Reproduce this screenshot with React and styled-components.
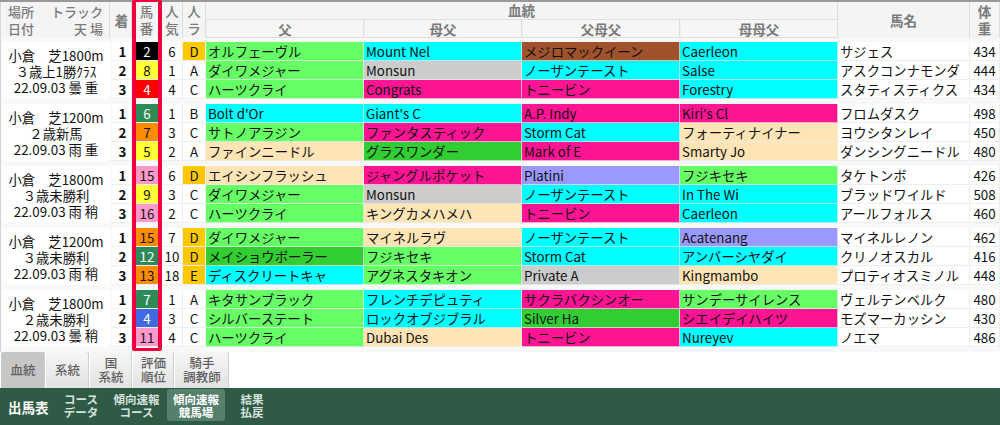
import React from 'react';
import styled, { createGlobalStyle } from 'styled-components';

const COLUMNS = '108px 2px 20px 30px 21px 23px 158px 158px 158px 158px 132px 30px';

const colors = {
  L: '#66ff66',
  C: '#00ffff',
  P: '#ff1493',
  M: '#ffe4b5',
  G: '#cccccc',
  B: '#a0522d',
  D: '#32cd32',
  V: '#9999ff',
};

const waku = {
  black: { bg: '#000000', fg: '#ffffff' },
  yellow: { bg: '#ffff33', fg: '#111111' },
  red: { bg: '#ff0000', fg: '#ffffff' },
  green: { bg: '#2e8b57', fg: '#ffffff' },
  orange: { bg: '#ff8c00', fg: '#111111' },
  pink: { bg: '#ff99cc', fg: '#111111' },
  blue: { bg: '#4169e1', fg: '#ffffff' },
};

const races = [
  {
    info: ['小倉　芝1800m', '３歳上1勝ｸﾗｽ', '22.09.03 曇 重'],
    rows: [
      ['2', 'black', '6', 'D', ['オルフェーヴル', 'L'], ['Mount Nel', 'C'], ['メジロマックイーン', 'B'], ['Caerleon', 'C'], 'サジェス', '434'],
      ['8', 'yellow', '1', 'A', ['ダイワメジャー', 'L'], ['Monsun', 'G'], ['ノーザンテースト', 'C'], ['Salse', 'C'], 'アスクコンナモンダ', '444'],
      ['4', 'red', '4', 'C', ['ハーツクライ', 'L'], ['Congrats', 'P'], ['トニービン', 'P'], ['Forestry', 'C'], 'スタティスティクス', '434'],
    ],
  },
  {
    info: ['小倉　芝1200m', '２歳新馬', '22.09.03 雨 重'],
    rows: [
      ['6', 'green', '1', 'B', ["Bolt d'Or", 'C'], ["Giant's C", 'C'], ['A.P. Indy', 'P'], ["Kiri's Cl", 'P'], 'フロムダスク', '498'],
      ['7', 'orange', '3', 'C', ['サトノアラジン', 'L'], ['ファンタスティック', 'P'], ['Storm Cat', 'C'], ['フォーティナイナー', 'M'], 'ヨウシタンレイ', '450'],
      ['5', 'yellow', '2', 'A', ['ファインニードル', 'M'], ['グラスワンダー', 'D'], ['Mark of E', 'P'], ['Smarty Jo', 'M'], 'ダンシングニードル', '480'],
    ],
  },
  {
    info: ['小倉　芝1800m', '３歳未勝利', '22.09.03 雨 稍'],
    rows: [
      ['15', 'pink', '6', 'D', ['エイシンフラッシュ', 'M'], ['ジャングルポケット', 'P'], ['Platini', 'V'], ['フジキセキ', 'L'], 'タケトンボ', '426'],
      ['9', 'yellow', '3', 'C', ['ダイワメジャー', 'L'], ['Monsun', 'G'], ['ノーザンテースト', 'C'], ['In The Wi', 'C'], 'ブラッドワイルド', '508'],
      ['16', 'pink', '2', 'C', ['ハーツクライ', 'L'], ['キングカメハメハ', 'M'], ['トニービン', 'P'], ['Caerleon', 'C'], 'アールフォルス', '460'],
    ],
  },
  {
    info: ['小倉　芝1200m', '３歳未勝利', '22.09.03 雨 稍'],
    rows: [
      ['15', 'orange', '7', 'D', ['ダイワメジャー', 'L'], ['マイネルラヴ', 'M'], ['ノーザンテースト', 'C'], ['Acatenang', 'V'], 'マイネルレノン', '462'],
      ['12', 'green', '10', 'D', ['メイショウボーラー', 'D'], ['フジキセキ', 'L'], ['Storm Cat', 'C'], ['アンバーシヤダイ', 'C'], 'クリノオスカル', '416'],
      ['13', 'orange', '18', 'E', ['ディスクリートキャ', 'C'], ['アグネスタキオン', 'L'], ['Private A', 'G'], ['Kingmambo', 'M'], 'プロティオスミノル', '448'],
    ],
  },
  {
    info: ['小倉　芝1800m', '２歳未勝利', '22.09.03 曇 稍'],
    rows: [
      ['7', 'green', '1', 'A', ['キタサンブラック', 'L'], ['フレンチデピュティ', 'C'], ['サクラバクシンオー', 'P'], ['サンデーサイレンス', 'L'], 'ヴェルテンベルク', '480'],
      ['4', 'blue', '3', 'C', ['シルバーステート', 'L'], ['ロックオブジブラル', 'C'], ['Silver Ha', 'D'], ['シエイデイハイツ', 'P'], 'モズマーカッシン', '430'],
      ['11', 'pink', '4', 'C', ['ハーツクライ', 'L'], ['Dubai Des', 'M'], ['トニービン', 'P'], ['Nureyev', 'C'], 'ノエマ', '486'],
    ],
  },
];

const tabs = [
  { label: ['血統'], width: 44, active: true },
  { label: ['系統'], width: 43 },
  { label: ['国', '系統'], width: 42 },
  { label: ['評価', '順位'], width: 41 },
  { label: ['騎手', '調教師'], width: 54 },
];

const navItems = [
  { label: ['コース', 'データ'], width: 50 },
  { label: ['傾向速報', 'コース'], width: 61 },
  { label: ['傾向速報', '競馬場'], width: 58, active: true },
  { label: ['結果', '払戻'], width: 54 },
];

const GlobalStyle = createGlobalStyle`
  html, body {
    margin: 0;
    padding: 0;
    background: #ffffff;
  }
  body {
    font-family: "Noto Sans CJK JP", "Noto Sans", sans-serif;
    color: #111111;
  }
`;

const Page = styled.div`
  position: relative;
  display: flex;
  flex-direction: column;
  width: 1000px;
  height: 425px;
  overflow: hidden;
  background: #ffffff;
`;

const TableArea = styled.div`
  display: flex;
  flex-direction: column;
  height: 352px;
  padding-left: 2px;
  border-top: 2px solid #9c9898;
  background: #f8f8f8;
  box-sizing: border-box;
  box-shadow: inset 1px 0 0 #d8d4d4;
`;

const Header = styled.div`
  display: grid;
  grid-template-columns: ${COLUMNS};
  grid-template-rows: 17px 19px;
  height: 36px;
  margin-bottom: 4px;
  color: #7a7a7a;
  font-weight: 700;
  font-size: 13.5px;
  line-height: 17px;
  background: #f4f4f4;
`;

const HeadCell = styled.div`
  grid-column: ${(p) => p.$col};
  grid-row: ${(p) => p.$row || '1 / 3'};
  display: flex;
  flex-direction: column;
  align-items: center;
  justify-content: center;
  text-align: center;
  border-right: 1px solid #dddddd;
  font-weight: ${(p) => (p.$light ? 500 : 700)};
  box-sizing: border-box;
`;

const SubHead = styled(HeadCell)`
  border: 1px solid #dedede;
  border-left-color: #eeeeee;
  background: #f6f6f6;
  padding-top: 2px;
`;

const PlaceHead = styled(HeadCell)`
  flex-direction: row;
  justify-content: space-between;
  padding: 0 6px;
  text-align: left;
  font-weight: 500;
  font-size: 13px;
  white-space: nowrap;
`;

const RightText = styled.div`
  text-align: right;
`;

const Race = styled.div`
  display: grid;
  grid-template-columns: ${COLUMNS};
  grid-auto-rows: 19px;
  margin-bottom: 5px;
`;

const Info = styled.div`
  grid-column: 1;
  grid-row: 1 / 4;
  display: flex;
  flex-direction: column;
  align-items: center;
  justify-content: center;
  padding-top: 3px;
  background: #ffffff;
  font-size: 13.33px;
  line-height: 16px;
  white-space: pre;
`;

const PlainCell = styled.div`
  display: flex;
  align-items: center;
  justify-content: ${(p) => p.$align || 'center'};
  background: #ffffff;
  border-bottom: 1px solid #eeeeee;
  border-right: 1px solid #eeeeee;
  box-sizing: border-box;
  font-size: 13.33px;
  font-weight: ${(p) => (p.$bold ? 700 : 400)};
  padding-left: ${(p) => (p.$align ? '2px' : '0')};
  white-space: nowrap;
  overflow: hidden;
`;

const Rank = styled(PlainCell)`
  grid-column: 3;
  padding-left: 2px;
`;

const Gate = styled.div`
  grid-column: 4;
  display: flex;
  align-items: center;
  justify-content: center;
  margin: 0 4px;
  background: ${(p) => p.$bg};
  color: ${(p) => p.$fg};
  border-bottom: 1px solid #eeeeee;
  box-sizing: border-box;
  font-size: 13.33px;
`;

const Mark = styled(PlainCell)`
  background: ${(p) => (p.$hot ? '#ffc800' : '#ffffff')};
`;

const Blood = styled.div`
  display: flex;
  align-items: center;
  padding-left: 2px;
  background: ${(p) => colors[p.$c]};
  border-right: 1px solid rgba(238, 238, 238, 0.7);
  border-bottom: 1px solid rgba(238, 238, 238, 0.7);
  box-sizing: border-box;
  font-size: 13.33px;
  white-space: nowrap;
  overflow: hidden;
`;

const RedFrame = styled.div`
  position: absolute;
  left: 132px;
  top: 0;
  width: 30px;
  height: 351px;
  border: 4px solid #f0003c;
  border-top-width: 2px;
  border-bottom-width: 3px;
  border-radius: 2px;
  box-sizing: border-box;
  pointer-events: none;
`;

const TabBar = styled.div`
  display: flex;
  gap: 1px;
  height: 36px;
  padding-left: 1px;
  background: #ffffff;
`;

const Tab = styled.div`
  display: flex;
  flex-direction: column;
  align-items: center;
  justify-content: center;
  width: ${(p) => p.$w}px;
  color: #5f5f5f;
  font-size: 12.5px;
  font-weight: 500;
  line-height: 14.5px;
  border-radius: 2px 2px 0 0;
  box-sizing: border-box;
  background: ${(p) =>
    p.$active ? '#c6c6c6' : 'linear-gradient(#f6f6f6, #e2e2e2)'};
  box-shadow: inset -1px 0 0 #cfcfcf;
`;

const NavBar = styled.div`
  display: flex;
  align-items: stretch;
  flex: 1;
  padding: 1px 0 4px 8px;
  background: #2f5a46;
  color: #ffffff;
`;

const NavTitle = styled.div`
  display: flex;
  align-items: center;
  width: 48px;
  font-size: 13.5px;
  font-weight: 700;
  padding-top: 3px;
`;

const NavItem = styled.div`
  display: flex;
  flex-direction: column;
  align-items: center;
  justify-content: center;
  width: ${(p) => p.$w}px;
  font-size: 11.5px;
  font-weight: 700;
  line-height: 13px;
  padding-top: 2px;
  color: ${(p) => (p.$active ? '#ffffff' : '#d8e2dd')};
  background: ${(p) => (p.$active ? '#55806c' : 'transparent')};
  border-radius: 3px;
`;

function RaceRow({ row }) {
  const [no, gate, pop, mark, f, mf, fmf, mmf, name, weight] = row;
  return (
    <>
      <Gate $bg={waku[gate].bg} $fg={waku[gate].fg}>
        {no}
      </Gate>
      <PlainCell>{pop}</PlainCell>
      <Mark $hot={mark === 'D' || mark === 'E'}>{mark}</Mark>
      {[f, mf, fmf, mmf].map(([text, c]) => (
        <Blood key={text + c} $c={c}>
          {text}
        </Blood>
      ))}
      <PlainCell $align="flex-start">{name}</PlainCell>
      <PlainCell>{weight}</PlainCell>
    </>
  );
}

export default function App() {
  return (
    <Page>
      <GlobalStyle />
      <TableArea>
        <Header>
          <PlaceHead $col="1">
            <div>
              場所
              <br />
              日付
            </div>
            <RightText>
              トラック
              <br />
              天 場
            </RightText>
          </PlaceHead>
          <HeadCell $col="3">着</HeadCell>
          <HeadCell $col="4" $light>
            <div>馬</div>
            <div>番</div>
          </HeadCell>
          <HeadCell $col="5" $light>
            <div>人</div>
            <div>気</div>
          </HeadCell>
          <HeadCell $col="6" $light>
            <div>人</div>
            <div>ラ</div>
          </HeadCell>
          <HeadCell $col="7 / 11" $row="1">
            血統
          </HeadCell>
          <SubHead $col="7" $row="2">父</SubHead>
          <SubHead $col="8" $row="2">母父</SubHead>
          <SubHead $col="9" $row="2">父母父</SubHead>
          <SubHead $col="10" $row="2">母母父</SubHead>
          <HeadCell $col="11">馬名</HeadCell>
          <HeadCell $col="12">
            <div>体</div>
            <div>重</div>
          </HeadCell>
        </Header>
        {races.map((race) => (
          <Race key={race.info.join() + race.rows[0][0]}>
            <Info>
              {race.info.map((line) => (
                <div key={line}>{line}</div>
              ))}
            </Info>
            {race.rows.map((row, i) => (
              <React.Fragment key={row[8]}>
                <Rank $bold style={{ gridRow: i + 1 }}>
                  {i + 1}
                </Rank>
                <RaceRow row={row} />
              </React.Fragment>
            ))}
          </Race>
        ))}
      </TableArea>
      <RedFrame />
      <TabBar>
        {tabs.map((tab) => (
          <Tab key={tab.label.join()} $w={tab.width} $active={tab.active}>
            {tab.label.map((l) => (
              <div key={l}>{l}</div>
            ))}
          </Tab>
        ))}
      </TabBar>
      <NavBar>
        <NavTitle>出馬表</NavTitle>
        {navItems.map((item) => (
          <NavItem key={item.label.join()} $w={item.width} $active={item.active}>
            {item.label.map((l) => (
              <div key={l}>{l}</div>
            ))}
          </NavItem>
        ))}
      </NavBar>
    </Page>
  );
}
